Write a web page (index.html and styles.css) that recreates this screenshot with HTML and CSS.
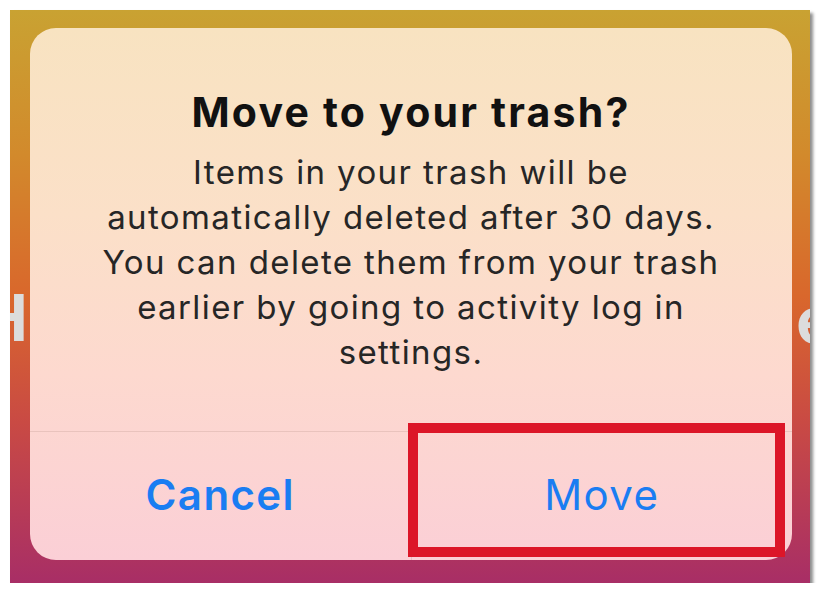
FILE: index.html
```html
<!DOCTYPE html>
<html>
<head>
<meta charset="utf-8">
<link rel="stylesheet" href="styles.css">
</head>
<body>
<div class="shot">
  <span class="bg-letter bg-left">H</span>
  <span class="bg-letter bg-right">e</span>
  <div class="dialog">
    <div class="content">
      <h1 class="title">Move to your trash?</h1>
      <p class="message">Items in your trash will be<br>automatically deleted after 30 days.<br>You can delete them from your trash<br>earlier by going to activity log in<br>settings.</p>
    </div>
    <div class="actions">
      <div class="btn btn-cancel">Cancel</div>
      <div class="btn btn-move">Move</div>
    </div>
  </div>
  <div class="highlight"></div>
</div>
</body>
</html>
```
FILE: styles.css
```css
html, body {
  margin: 0;
  padding: 0;
  background: #ffffff;
}

body {
  font-family: Inter, "Noto Sans", "Liberation Sans", sans-serif;
}

.shot {
  position: relative;
  margin: 10px 0 0 10px;
  width: 800px;
  height: 573px;
  box-sizing: border-box;
  padding: 18px 18px 23px 20px;
  background: linear-gradient(180deg, #c9a232 0%, #d28a2c 25%, #d9672c 50%, #c94a44 72%, #a82e66 100%);
  box-shadow: 3px 3px 3px rgba(0, 0, 0, 0.45);
  overflow: hidden;
  display: flex;
}

.bg-letter {
  position: absolute;
  font-size: 64px;
  font-weight: 700;
  color: #dcdcdc;
  line-height: 1;
}

.bg-left {
  left: -30px;
  top: 276px;
}

.bg-right {
  right: -24px;
  top: 278px;
}

.dialog {
  position: relative;
  flex: 1;
  display: flex;
  flex-direction: column;
  border-radius: 26px;
  background: linear-gradient(180deg, #f8e3c1 0%, #fbe0c8 35%, #fdd9cf 65%, #fbcfd6 100%);
  overflow: hidden;
}

.content {
  height: 404px;
  box-sizing: border-box;
  padding-top: 60px;
  text-align: center;
  border-bottom: 1px solid rgba(150, 110, 100, 0.18);
}

.title {
  margin: 0;
  font-size: 41px;
  font-weight: 700;
  line-height: 48px;
  color: #111;
  letter-spacing: 2.2px;
}

.message {
  margin: 14px 0 0 0;
  font-size: 33px;
  line-height: 45px;
  color: #262626;
  font-weight: 400;
  letter-spacing: 1.4px;
}

.actions {
  flex: 1;
  display: flex;
}

.btn {
  flex: 1;
  display: flex;
  align-items: center;
  justify-content: center;
  font-size: 42px;
  color: #1a7df2;
  padding-bottom: 4px;
  letter-spacing: 1.4px;
}

.btn-cancel {
  font-weight: 600;
  border-right: 1px solid rgba(150, 110, 100, 0.18);
}

.btn-move {
  font-weight: 400;
}

.highlight {
  position: absolute;
  left: 398px;
  top: 413px;
  width: 377px;
  height: 134px;
  box-sizing: border-box;
  border: 10px solid #dc1628;
}
```
